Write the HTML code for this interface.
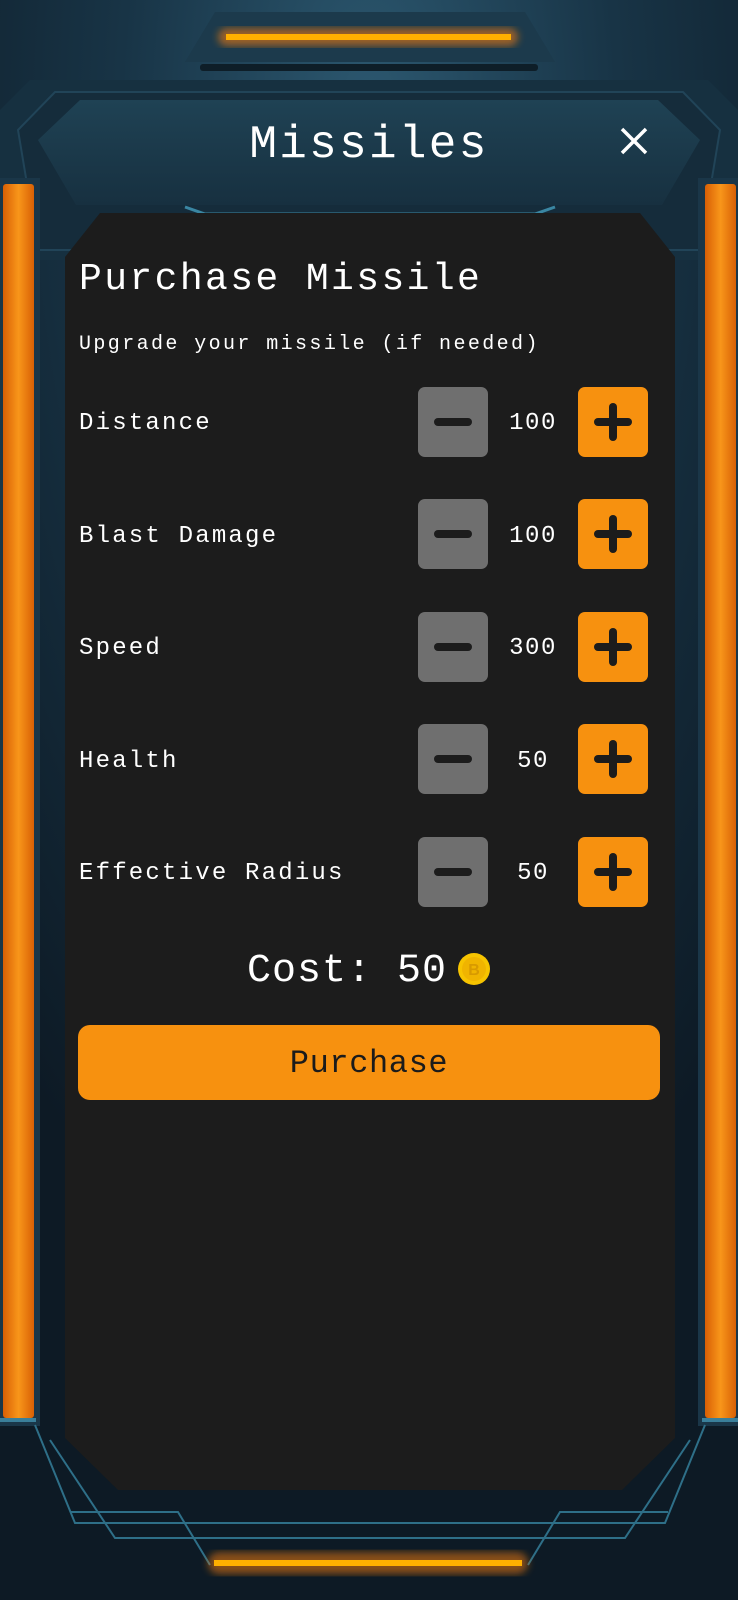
<!DOCTYPE html>
<html><head><meta charset="utf-8"><style>
html,body{margin:0;padding:0;}
body{width:738px;height:1600px;position:relative;overflow:hidden;background:#142838;font-family:"Liberation Mono",monospace;color:#fff;}
.abs{position:absolute;}
.t{position:absolute;white-space:nowrap;}
.lbl{font-size:24px;letter-spacing:2.2px;left:79px;}
.val{font-size:24px;letter-spacing:1.5px;width:90px;text-align:center;left:488px;}
.btn{position:absolute;width:70px;height:70px;border-radius:7px;}
.minus{left:418px;background:#6f6f6f;}
.plus{left:578px;background:#f7910f;}
.bar{position:absolute;background:#1c1c1c;border-radius:4px;}
</style></head><body>
<svg class="abs" style="left:0;top:0" width="738" height="1600">
<defs>
<radialGradient id="bg" cx="50%" cy="8%" r="75%"><stop offset="0" stop-color="#2c5870"/><stop offset="0.45" stop-color="#183446"/><stop offset="1" stop-color="#0d1a25"/></radialGradient>
<linearGradient id="ob" x1="0" x2="1"><stop offset="0" stop-color="#d85f05"/><stop offset="0.5" stop-color="#f8961a"/><stop offset="1" stop-color="#d86005"/></linearGradient>
<linearGradient id="hd" x1="0" y1="0" x2="0" y2="1"><stop offset="0" stop-color="#1f4254"/><stop offset="1" stop-color="#173040"/></linearGradient>
<filter id="gl"><feGaussianBlur stdDeviation="4"/></filter>
</defs>
<rect width="738" height="1600" fill="url(#bg)"/>
<polygon points="215,12 525,12 555,62 185,62" fill="#1c3a4c"/>
<rect x="218" y="28" width="300" height="18" rx="9" fill="#f07a10" opacity="0.6" filter="url(#gl)"/>
<rect x="226" y="34" width="285" height="6" fill="#ffb000"/>
<rect x="200" y="64" width="338" height="7" rx="3" fill="#0e1e28"/>
<polygon points="30,80 708,80 738,110 738,260 30,260 0,230 0,110" fill="#163040"/>
<polygon points="55,92 683,92 720,130 700,250 38,250 18,130" fill="#152c3b" stroke="#214458" stroke-width="2"/>
<polygon points="80,100 658,100 700,140 662,205 76,205 38,140" fill="url(#hd)"/>
<path d="M185 207 L205 214 L535 214 L555 207" stroke="#3a86a2" stroke-width="3" fill="none"/>
<rect x="0" y="178" width="40" height="1248" fill="#1a3648"/>
<rect x="698" y="178" width="40" height="1248" fill="#1a3648"/>
<rect x="3" y="184" width="31" height="1234" rx="3" fill="url(#ob)"/>
<rect x="705" y="184" width="31" height="1234" rx="3" fill="url(#ob)"/>
<rect x="0" y="1418" width="36" height="4" fill="#3a7f9a"/>
<rect x="702" y="1418" width="36" height="4" fill="#3a7f9a"/>
<path d="M50 1440 L115 1538 L625 1538 L690 1440" stroke="#2e6f88" stroke-width="2" fill="none"/>
<path d="M35 1485 L75 1583 L665 1583 L705 1485" stroke="#2e6f88" stroke-width="2" fill="none" transform="translate(0,-60) scale(1,1)"/>
<path d="M70 1612 L178 1612 L210 1665 M668 1612 L560 1612 L528 1665" stroke="#2e6f88" stroke-width="2" fill="none" transform="translate(0,-100)"/>
<rect x="208" y="1552" width="320" height="22" rx="11" fill="#f07a10" opacity="0.55" filter="url(#gl)"/>
<rect x="214" y="1560" width="308" height="6" fill="#ffb000"/>
<polygon points="100,213 640,213 675,257 675,1438 622,1490 118,1490 65,1438 65,257" fill="#1c1c1c"/>
</svg>
<div class="t" style="left:0;width:738px;text-align:center;top:119px;font-size:46px;letter-spacing:2.3px;">Missiles</div>
<svg class="abs" style="left:619px;top:126px" width="30" height="30"><path d="M3 3 L27 27 M27 3 L3 27" stroke="#fff" stroke-width="3.5"/></svg>
<div class="t" style="left:79px;top:258px;font-size:38px;letter-spacing:2.4px;">Purchase Missile</div>
<div class="t" style="left:79px;top:333px;font-size:20px;letter-spacing:2.4px;">Upgrade your missile (if needed)</div>

<div class="t lbl" style="top:410px">Distance</div>
<div class="btn minus" style="top:387px"><div class="bar" style="left:16px;top:31px;width:38px;height:8px"></div></div>
<div class="t val" style="top:410px">100</div>
<div class="btn plus" style="top:387px"><div class="bar" style="left:16px;top:31px;width:38px;height:8px"></div><div class="bar" style="left:31px;top:16px;width:8px;height:38px"></div></div>

<div class="t lbl" style="top:523px">Blast Damage</div>
<div class="btn minus" style="top:499px"><div class="bar" style="left:16px;top:31px;width:38px;height:8px"></div></div>
<div class="t val" style="top:523px">100</div>
<div class="btn plus" style="top:499px"><div class="bar" style="left:16px;top:31px;width:38px;height:8px"></div><div class="bar" style="left:31px;top:16px;width:8px;height:38px"></div></div>

<div class="t lbl" style="top:635px">Speed</div>
<div class="btn minus" style="top:612px"><div class="bar" style="left:16px;top:31px;width:38px;height:8px"></div></div>
<div class="t val" style="top:635px">300</div>
<div class="btn plus" style="top:612px"><div class="bar" style="left:16px;top:31px;width:38px;height:8px"></div><div class="bar" style="left:31px;top:16px;width:8px;height:38px"></div></div>

<div class="t lbl" style="top:748px">Health</div>
<div class="btn minus" style="top:724px"><div class="bar" style="left:16px;top:31px;width:38px;height:8px"></div></div>
<div class="t val" style="top:748px">50</div>
<div class="btn plus" style="top:724px"><div class="bar" style="left:16px;top:31px;width:38px;height:8px"></div><div class="bar" style="left:31px;top:16px;width:8px;height:38px"></div></div>

<div class="t lbl" style="top:860px">Effective Radius</div>
<div class="btn minus" style="top:837px"><div class="bar" style="left:16px;top:31px;width:38px;height:8px"></div></div>
<div class="t val" style="top:860px">50</div>
<div class="btn plus" style="top:837px"><div class="bar" style="left:16px;top:31px;width:38px;height:8px"></div><div class="bar" style="left:31px;top:16px;width:8px;height:38px"></div></div>

<div class="t" style="left:247px;top:949px;font-size:40px;letter-spacing:1px;">Cost: 50</div>
<svg class="abs" style="left:458px;top:953px" width="32" height="32"><circle cx="16" cy="16" r="16" fill="#f7c400"/><circle cx="16" cy="16" r="12" fill="#f0b400"/><text x="16" y="22" font-size="16" text-anchor="middle" fill="#d89a00" font-family="Liberation Sans,sans-serif" font-weight="bold">B</text></svg>
<div class="abs" style="left:78px;top:1025px;width:582px;height:75px;background:#f7910f;border-radius:12px;"></div>
<div class="t" style="left:78px;width:582px;text-align:center;top:1045px;font-size:32px;letter-spacing:0.6px;color:#1b1b1b;">Purchase</div>
</body></html>
